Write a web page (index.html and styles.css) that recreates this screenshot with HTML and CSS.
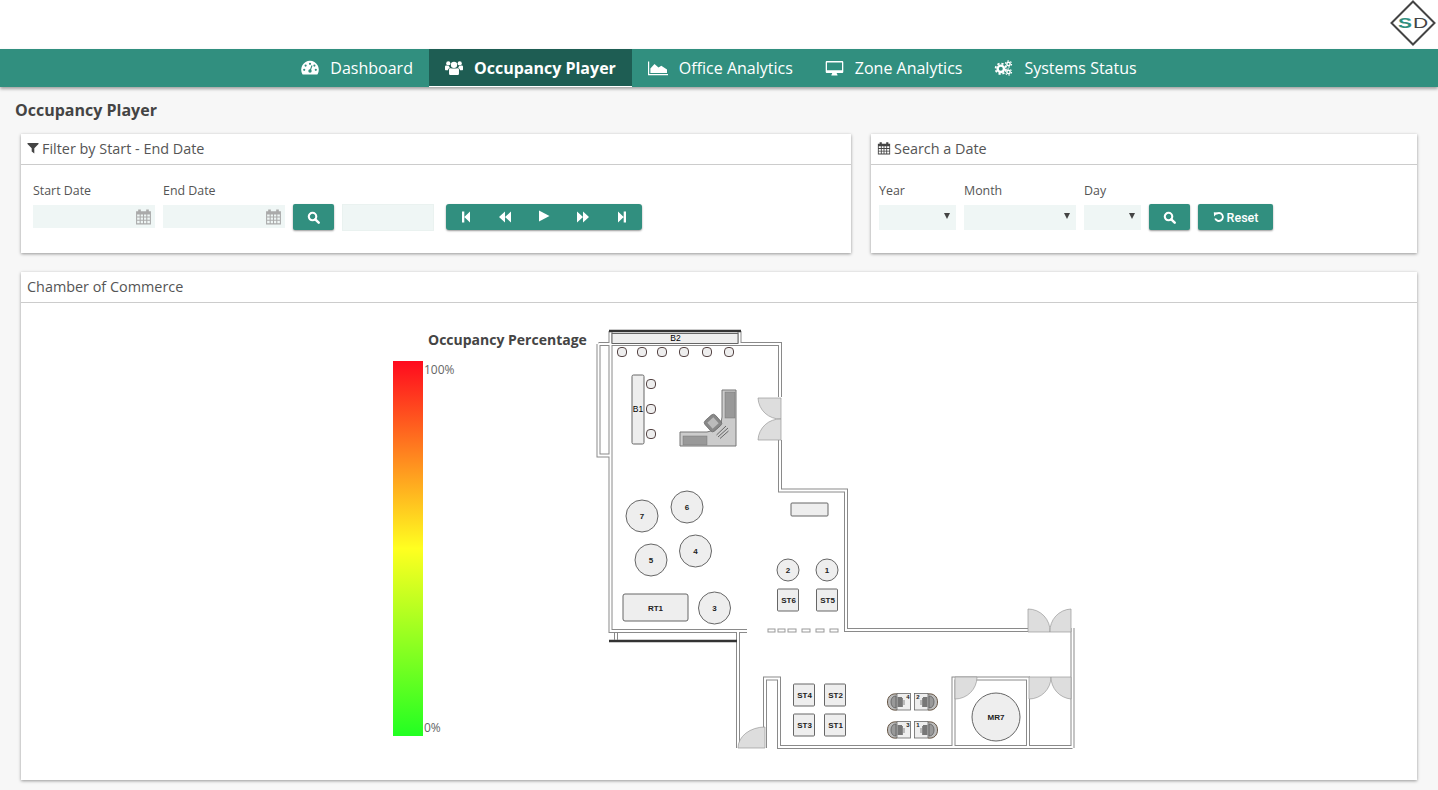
FILE: index.html
```html
<!DOCTYPE html>
<html lang="en">
<head>
  <meta charset="utf-8">
  <title>Occupancy Player</title>
  <link rel="stylesheet" href="styles.css">
</head>
<body>
  <svg class="icon-defs" width="0" height="0">
    <symbol id="i-search" viewBox="0 0 16 16">
      <circle cx="6.8" cy="6.8" r="4.6" fill="none" stroke="currentColor" stroke-width="2.6"/>
      <path d="M10.2 10.2L14.4 14.4" stroke="currentColor" stroke-width="3" stroke-linecap="round"/>
    </symbol>
    <symbol id="i-cal" viewBox="0 0 16 16">
      <path fill="currentColor" fill-rule="evenodd" d="M1 3h2V1.5h2.5V3h5V1.5H13V3h2v12.5H1zM2 6v2h2.4V6zm3.4 0v2h2.1V6zm3.1 0v2h2.1V6zm3.1 0v2H14V6zM2 9v2h2.4V9zm3.4 0v2h2.1V9zm3.1 0v2h2.1V9zm3.1 0v2H14V9zM2 12v2.4h2.4V12zm3.4 0v2.4h2.1V12zm3.1 0v2.4h2.1V12zm3.1 0v2.4H14V12z"/>
    </symbol>
  </svg>

  <header class="topbar">
    <svg class="logo" width="46" height="46" viewBox="0 0 46 46">
      <path d="M23 1.500L44.500 23L23 44.500L1.500 23Z" fill="#fff" stroke="#444" stroke-width="2"/>
      <text class="logo-s" transform="translate(8 28) scale(1.4 1)">S</text>
      <text class="logo-d" transform="translate(23 28) scale(1.4 1)">D</text>
    </svg>
  </header>

  <nav class="mainnav">
    <a class="navitem">
      <svg class="navicon" viewBox="0 0 18 16">
        <path fill="#fff" d="M9 .8a8.800 8.800 0 0 1 7.700 13.100c-.2.400-.5.600-1 .6H2.300c-.5 0-.8-.2-1-.6A8.800 8.800 0 0 1 9 .8z"/>
        <g fill="#318f7f"><circle cx="9" cy="3.800" r="1.100"/><circle cx="4.600" cy="5.600" r="1.100"/><circle cx="13.400" cy="5.600" r="1.100"/><circle cx="3.200" cy="9.800" r="1.100"/><circle cx="14.800" cy="9.800" r="1.100"/><circle cx="9" cy="11" r="1.700"/></g>
        <path d="M9 11L11 5.500" stroke="#318f7f" stroke-width="1.100"/>
      </svg>
      Dashboard
    </a>
    <a class="navitem active">
      <svg class="navicon" viewBox="0.500 1 17 14">
        <g fill="#fff">
          <circle cx="9" cy="5" r="3"/><circle cx="3.600" cy="3.700" r="2"/><circle cx="14.400" cy="3.700" r="2"/>
          <path d="M4.300 9.500c0-1 1-1.500 2-1.300.8.500 4.600.500 5.400 0 1-.2 2 .3 2 1.300v3.800c0 1-.6 1.400-1.500 1.400H5.800c-.9 0-1.500-.4-1.500-1.400z"/>
          <path d="M.5 6.700c0-.8 1-1.300 1.800-1 .7.400 1.600.3 2 .3.100.9.500 1.400 1 1.900-1.200.3-1.900 1.100-2 2.300H1.400C.8 10.200.5 9.800.5 9.200zM17.500 6.700c0-.8-1-1.300-1.800-1-.7.400-1.600.3-2 .3-.1.900-.5 1.400-1 1.900 1.200.3 1.900 1.100 2 2.300h1.900c.6 0 .9-.4.9-1z"/>
        </g>
      </svg>
      Occupancy Player
    </a>
    <a class="navitem">
      <svg class="navicon navicon-wide" viewBox="0 0 20 16">
        <path fill="#fff" d="M0 1.500h1.200V14H20v1.200H0z"/>
        <path fill="#fff" d="M2.400 13V8.500L6.500 4l4 3.500 2.800-1.800L19 9.500V13z"/>
      </svg>
      Office Analytics
    </a>
    <a class="navitem">
      <svg class="navicon navicon-mid" viewBox="0 0 18 16">
        <path fill="#fff" fill-rule="evenodd" d="M1.500 1h15c.8 0 1.300.5 1.300 1.300v9.400c0 .8-.5 1.300-1.300 1.300h-5.300c0 .8.300 1.200.8 1.800v.6H5.900v-.6c.5-.6.800-1 .8-1.800H1.500c-.8 0-1.300-.5-1.300-1.300V2.300C.2 1.500.7 1 1.500 1zm0 1.500v7.700h15V2.500z"/>
      </svg>
      Zone Analytics
    </a>
    <a class="navitem">
      <svg class="navicon navicon-mid" viewBox="0 0 18 16">
        <g fill="none" stroke="#fff">
          <circle cx="6.300" cy="8.800" r="3.200" stroke-width="2.400"/>
          <circle cx="6.300" cy="8.800" r="5.200" stroke-width="1.800" stroke-dasharray="2.200 1.880"/>
          <circle cx="14" cy="4" r="1.700" stroke-width="1.500"/>
          <circle cx="14" cy="4" r="3.100" stroke-width="1.100" stroke-dasharray="1.500 1.750"/>
          <circle cx="14" cy="12" r="1.700" stroke-width="1.500"/>
          <circle cx="14" cy="12" r="3.100" stroke-width="1.100" stroke-dasharray="1.500 1.750"/>
        </g>
      </svg>
      Systems Status
    </a>
  </nav>

  <main class="content">
    <h1 class="pagetitle">Occupancy Player</h1>

    <div class="filters">
      <section class="card">
        <h2 class="cardhead">
          <svg class="headicon" viewBox="0 0 12 12"><path fill="currentColor" d="M.5 1h11v.9L7.300 6.300v5.200L4.700 9.600V6.300L.5 1.900z"/></svg>
          Filter by Start - End Date
        </h2>
        <div class="filterbody">
          <div class="field">
            <label class="fieldlabel">Start Date</label>
            <div class="datebox">
              <input class="dateinput" type="text">
              <svg class="dateicon"><use href="#i-cal"/></svg>
            </div>
          </div>
          <div class="field">
            <label class="fieldlabel">End Date</label>
            <div class="datebox">
              <input class="dateinput" type="text">
              <svg class="dateicon"><use href="#i-cal"/></svg>
            </div>
          </div>
          <button class="btn btn-search"><svg class="btnicon"><use href="#i-search"/></svg></button>
          <input class="timebox" type="text">
          <div class="player">
            <button class="playbtn"><svg class="playicon" viewBox="0 0 12 12"><path d="M2 .5h2.300v11H2zM4.300 6L10 .5v11z"/></svg></button>
            <button class="playbtn"><svg class="playicon" viewBox="0 0 12 12"><path d="M0 6l6-5.500v11zM6 6l6-5.500v11z"/></svg></button>
            <button class="playbtn"><svg class="playicon play-main" viewBox="0 0 12 12"><path d="M1 .5L11.500 6 1 11.500z"/></svg></button>
            <button class="playbtn"><svg class="playicon" viewBox="0 0 12 12"><path d="M0 .5L6 6 0 11.500zM6 .5L12 6l-6 5.500z"/></svg></button>
            <button class="playbtn"><svg class="playicon" viewBox="0 0 12 12"><path d="M2 .5L7.700 6 2 11.500zM7.700 .5H10v11H7.700z"/></svg></button>
          </div>
        </div>
      </section>

      <section class="card">
        <h2 class="cardhead">
          <svg class="headicon headicon-cal"><use href="#i-cal"/></svg>
          Search a Date
        </h2>
        <div class="filterbody filterbody-date">
          <div class="field">
            <label class="fieldlabel">Year</label>
            <div class="selectbox sel-year"><select class="dropdown"></select></div>
          </div>
          <div class="field">
            <label class="fieldlabel">Month</label>
            <div class="selectbox sel-month"><select class="dropdown"></select></div>
          </div>
          <div class="field">
            <label class="fieldlabel">Day</label>
            <div class="selectbox sel-day"><select class="dropdown"></select></div>
          </div>
          <button class="btn btn-search"><svg class="btnicon"><use href="#i-search"/></svg></button>
          <button class="btn btn-reset">
            <svg class="reseticon" viewBox="0 0 12 12"><path d="M3 3.200A4 4 0 1 1 2.200 7.500" fill="none" stroke="currentColor" stroke-width="1.900"/><path d="M.8 1.300L5 1.600 1.100 5.400z" fill="currentColor"/></svg>Reset
          </button>
        </div>
      </section>
    </div>

    <section class="card plancard">
      <h2 class="cardhead">Chamber of Commerce</h2>
      <div class="planbody">
        <div class="legend">
          <h3 class="legendtitle">Occupancy Percentage</h3>
          <div class="legendscale">
            <div class="legendbar"></div>
            <div class="legendticks"><span>100%</span><span>0%</span></div>
          </div>
        </div>

        <!-- floor plan, viewBox uses the coordinates of the drawing itself -->
        <svg class="floorplan" width="490" height="430" viewBox="590 325 490 430">
          <defs>
            <symbol id="desk-l" viewBox="0 0 24 18" overflow="visible">
              <path d="M10 1C4 0 .5 4 .5 9s3.500 9 9.500 8" fill="#bbb" stroke="#654" stroke-width="1"/>
              <path d="M9 3C5.500 3 4 6 4 9s1.500 6 5 6z" fill="#999" stroke="#555" stroke-width=".7"/>
              <rect x="10" y=".5" width="13.500" height="16.500" fill="#eee" stroke="#666" stroke-width=".8"/>
              <rect x="10.500" y="4" width="4.500" height="10" fill="#777"/>
              <path d="M15.500 5v9M17 7v5" stroke="#888" stroke-width="1"/>
            </symbol>
            <g id="walls">
              <path d="M598.500 344H780V397"/>
              <path d="M598.500 344V455.500H610.500"/>
              <path d="M610.500 331V631H747"/>
              <path d="M739.500 331V344"/>
              <path d="M780 440V490.500H846V630H1029"/>
              <path d="M738 630V748"/>
              <path d="M1072.500 628V748"/>
              <path d="M765 748V678.500H779V747H1072.500"/>
              <path d="M953.500 747V678.500H1028V747"/>
            </g>
          </defs>

          <!-- walls: dark stroke with a white one on top gives the double line -->
          <use href="#walls" class="wall-outer"/>
          <use href="#walls" class="wall-inner"/>

          <g class="wallbar">
            <path d="M609 331H741"/>
            <path d="M609 641H737"/>
          </g>
          <path d="M614.500 632V640M617.500 632V640" class="thinline"/>

          <g class="dashes">
            <rect x="768" y="629" width="7" height="3"/><rect x="778" y="629" width="7" height="3"/><rect x="788" y="629" width="8" height="3"/>
            <rect x="802" y="629" width="8" height="3"/><rect x="816" y="629" width="8" height="3"/><rect x="830" y="629" width="8" height="3"/>
          </g>

          <!-- doors -->
          <g class="door">
            <path d="M781 398H758A22 22 0 0 0 781 419Z"/>
            <path d="M781 440H758A22 22 0 0 1 781 419Z"/>
            <path d="M1028 632V609A22 22 0 0 1 1050 632Z"/>
            <path d="M1071 632V609A22 22 0 0 0 1050 632Z"/>
            <path d="M1029 677H1051A22 22 0 0 1 1029 699Z"/>
            <path d="M1071 677H1051A22 22 0 0 0 1071 699Z"/>
            <path d="M955 677H977A22 22 0 0 1 955 699Z"/>
            <path d="M765 727A27 21 0 0 0 738 748H765Z"/>
          </g>

          <!-- furniture -->
          <g class="item">
            <rect x="612" y="333.500" width="126" height="10"/>
            <rect x="632" y="375" width="12" height="69" rx="1.500"/>
            <rect x="791" y="503" width="37" height="13" rx="1"/>
            <rect x="623" y="594" width="65" height="27" rx="2"/>
            <rect x="777.500" y="589" width="21" height="22" rx="1"/>
            <rect x="816.500" y="589" width="21" height="22" rx="1"/>
            <rect x="793.500" y="684" width="21" height="22" rx="1"/>
            <rect x="824.500" y="684" width="21" height="22" rx="1"/>
            <rect x="793.500" y="714" width="21" height="22" rx="1"/>
            <rect x="824.500" y="714" width="21" height="22" rx="1"/>
            <circle cx="642" cy="516" r="16"/>
            <circle cx="687" cy="507" r="16"/>
            <circle cx="651" cy="560" r="16"/>
            <circle cx="695.500" cy="551" r="16"/>
            <circle cx="714.500" cy="608" r="16"/>
            <circle cx="788" cy="570" r="11"/>
            <circle cx="827" cy="570" r="11"/>
            <circle cx="996" cy="717" r="24"/>
          </g>
          <g class="stool">
            <rect x="617.500" y="347.500" width="9" height="9" rx="3.500"/>
            <rect x="637.500" y="347.500" width="9" height="9" rx="3.500"/>
            <rect x="657.500" y="347.500" width="9" height="9" rx="3.500"/>
            <rect x="679.500" y="347.500" width="9" height="9" rx="3.500"/>
            <rect x="702.500" y="347.500" width="9" height="9" rx="3.500"/>
            <rect x="724.500" y="347.500" width="9" height="9" rx="3.500"/>
            <rect x="646.500" y="379.500" width="9" height="9" rx="3.500"/>
            <rect x="646.500" y="404.500" width="9" height="9" rx="3.500"/>
            <rect x="646.500" y="429.500" width="9" height="9" rx="3.500"/>
          </g>

          <!-- sofa corner -->
          <path d="M722 390H736V446H680V432H707Q722 430 722 417Z" fill="#ccc" stroke="#777"/>
          <rect x="725" y="392" width="10" height="26" fill="#999" stroke="#777" stroke-width=".5"/>
          <rect x="683" y="436" width="24" height="9" fill="#999" stroke="#777" stroke-width=".5"/>
          <rect x="706" y="416" width="14" height="14" rx="3" transform="rotate(-42 713 423)" fill="#888" stroke="#666" stroke-width=".7"/>
          <rect x="709" y="419" width="8" height="8" transform="rotate(-42 713 423)" fill="#bbb"/>
          <path d="M716.500 435L726 426M718 437L728 428M720 438.500L728.500 431" stroke="#666" stroke-width="1"/>

          <!-- desks -->
          <use href="#desk-l" x="887" y="693" width="24" height="18"/>
          <use href="#desk-l" x="887" y="721" width="24" height="18"/>
          <use href="#desk-l" width="24" height="18" transform="translate(938 693) scale(-1 1)"/>
          <use href="#desk-l" width="24" height="18" transform="translate(938 721) scale(-1 1)"/>

          <g class="label">
            <text x="675.500" y="341" class="plain">B2</text>
            <text x="638" y="412" class="plain">B1</text>
            <text x="642" y="518.500">7</text>
            <text x="687" y="509.500">6</text>
            <text x="651" y="562.500">5</text>
            <text x="695.500" y="553.500">4</text>
            <text x="714.500" y="610.500">3</text>
            <text x="788" y="572.500">2</text>
            <text x="827" y="572.500">1</text>
            <text x="655.500" y="610.500">RT1</text>
            <text x="788.500" y="602.500">ST6</text>
            <text x="827.500" y="602.500">ST5</text>
            <text x="804.500" y="697.500">ST4</text>
            <text x="835.500" y="697.500">ST2</text>
            <text x="804.500" y="727.500">ST3</text>
            <text x="835.500" y="727.500">ST1</text>
            <text x="996" y="720">MR7</text>
            <text x="908" y="699" class="tiny">4</text>
            <text x="918" y="699" class="tiny">2</text>
            <text x="908" y="727" class="tiny">3</text>
            <text x="918" y="727" class="tiny">1</text>
          </g>
        </svg>
      </div>
    </section>
  </main>
</body>
</html>
```

FILE: styles.css
```css
* {
  box-sizing: border-box;
}
html, body {
  margin: 0;
  padding: 0;
}
body {
  font-family: "Open Sans", Arial, sans-serif;
  background-color: #f7f7f7;
  color: #444;
  overflow: hidden;
  height: 790px;
}
.icon-defs {
  position: absolute;
}

/* header */
.topbar {
  height: 49px;
  background-color: #fff;
  display: flex;
  justify-content: flex-end;
  padding-right: 2px;
}
.logo {
  display: block;
}
.logo-s, .logo-d {
  font-family: "Liberation Sans", Arial, sans-serif;
  font-size: 15px;
}
.logo-s {
  fill: #318f7f;
  font-weight: bold;
}
.logo-d {
  fill: #444;
}

/* nav */
.mainnav {
  height: 38px;
  background-color: #318f7f;
  display: flex;
  justify-content: center;
  box-shadow: 0 2px 3px rgba(0, 0, 0, .35);
  position: relative;
}
.navitem {
  display: flex;
  align-items: center;
  gap: 11px;
  padding: 0 16px;
  color: #fff;
  font-size: 16px;
}
.navitem.active {
  background-color: #1e5d53;
  border-bottom: 1px solid #fff;
  font-weight: 700;
}
.navicon {
  width: 18px;
  height: 16px;
}
.navicon-wide {
  width: 20px;
}
.navicon-mid {
  width: 19px;
}

/* main */
.content {
  padding: 0 21px;
}
.pagetitle {
  font-size: 16px;
  font-weight: 700;
  line-height: 22px;
  margin: 12px 0 13px -6px;
}
.filters {
  display: grid;
  grid-template-columns: 830px 546px;
  gap: 20px;
  margin-bottom: 19px;
}
.card {
  background-color: #fff;
  box-shadow: 0 1px 3px rgba(0, 0, 0, .4);
  height: 119px;
}
.cardhead {
  height: 31px;
  margin: 0;
  padding: 0 6px 2px;
  display: flex;
  align-items: center;
  gap: 3px;
  font-size: 14.4px;
  font-weight: 400;
  color: #555;
  border-bottom: 1px solid #ccc;
}
.headicon {
  width: 12px;
  height: 12px;
  color: #444;
}
.headicon-cal {
  width: 14px;
  height: 14px;
}
.filterbody {
  display: flex;
  align-items: flex-start;
  padding: 18px 12px 0;
  gap: 8px;
}
.filterbody-date {
  padding-left: 8px;
}
.field {
  display: flex;
  flex-direction: column;
}
.fieldlabel {
  font-size: 12.4px;
  line-height: 16px;
  margin-bottom: 6px;
  color: #555;
}
.datebox {
  width: 122px;
  height: 23px;
  background-color: #eff6f5;
  display: flex;
  align-items: center;
  position: relative;
}
.dateinput {
  flex: 1;
  width: 90px;
  height: 23px;
  border: none;
  background: transparent;
  outline: none;
}
.dateicon {
  width: 17px;
  height: 17px;
  margin: 0 3px 0 7px;
  color: #aaa;
}
.btn {
  height: 26px;
  margin-top: 21px;
  border: none;
  border-radius: 2px;
  background-color: #318f7f;
  color: #fff;
  box-shadow: 0 1px 2px rgba(0, 0, 0, .4);
  display: flex;
  align-items: center;
  justify-content: center;
  padding: 0;
}
.btn-search {
  width: 41px;
}
.btnicon {
  width: 13px;
  height: 13px;
}
.btn-reset {
  width: 75px;
  font-family: Roboto, Arial, sans-serif;
  font-size: 12.5px;
  font-weight: 500;
  gap: 2px;
}
.reseticon {
  width: 12px;
  height: 12px;
}
.timebox {
  width: 92px;
  height: 27px;
  margin-top: 21px;
  border: 1px solid #eaf2f0;
  background-color: #eff6f5;
  outline: none;
}
.player {
  display: flex;
  width: 196px;
  height: 26px;
  margin: 21px 0 0 4px;
  border-radius: 3px;
  background-color: #318f7f;
  box-shadow: 0 1px 2px rgba(0, 0, 0, .4);
  overflow: hidden;
}
.playbtn {
  flex: 1;
  border: none;
  padding: 0;
  background: transparent;
  display: flex;
  align-items: center;
  justify-content: center;
}
.playicon {
  width: 12px;
  height: 12px;
  fill: #fff;
}
.play-main {
  margin-top: -2px;
}
.selectbox {
  height: 25px;
  position: relative;
  background-color: #eff6f5;
}
.selectbox::after {
  content: "";
  position: absolute;
  right: 6px;
  top: 8px;
  border-left: 3px solid transparent;
  border-right: 3px solid transparent;
  border-top: 6px solid #444;
}
.sel-year {
  width: 77px;
}
.sel-month {
  width: 112px;
}
.sel-day {
  width: 57px;
}
.dropdown {
  width: 100%;
  height: 100%;
  border: none;
  background: transparent;
  appearance: none;
  outline: none;
}

/* plan card */
.plancard {
  height: 508px;
}
.planbody {
  display: flex;
  align-items: flex-start;
  padding: 22px 0 0 372px;
}
.legend {
  width: 195px;
  padding-top: 5px;
}
.legendtitle {
  margin: 0 0 11px 35px;
  font-size: 14px;
  font-weight: 700;
  line-height: 20px;
  white-space: nowrap;
  color: #444;
}
.legendscale {
  display: flex;
  height: 375px;
}
.legendbar {
  width: 30px;
  background: linear-gradient(to bottom, #ff0a1e 0%, #ffff20 50%, #22ff22 100%);
}
.legendticks {
  display: flex;
  flex-direction: column;
  justify-content: space-between;
  padding: 1px 0 0 1px;
  font-size: 12px;
  line-height: 16px;
  color: #666;
}
.floorplan {
  display: block;
  margin-left: 2px;
}

/* floor plan drawing */
.wall-outer {
  fill: none;
  stroke: #8a8a8a;
  stroke-width: 4;
}
.wall-inner {
  fill: none;
  stroke: #fff;
  stroke-width: 2;
}
.thinline {
  fill: none;
  stroke: #888;
  stroke-width: 1;
}
.wallbar path {
  stroke: #333;
  stroke-width: 2.5;
}
.dashes rect {
  fill: #fff;
  stroke: #999;
  stroke-width: 1;
}
.door path {
  fill: #ddd;
  stroke: #999;
  stroke-width: .7;
}
.item rect, .item circle {
  fill: #eee;
  stroke: #666;
  stroke-width: 1;
}
.stool rect {
  fill: #eee;
  stroke: #544;
  stroke-width: 1;
}
.label text {
  font-family: "Liberation Sans", Arial, sans-serif;
  font-size: 8px;
  font-weight: bold;
  text-anchor: middle;
  fill: #222;
}
.label .plain {
  font-size: 8.5px;
  font-weight: normal;
  fill: #000;
}
.label .tiny {
  font-size: 6px;
}
```
